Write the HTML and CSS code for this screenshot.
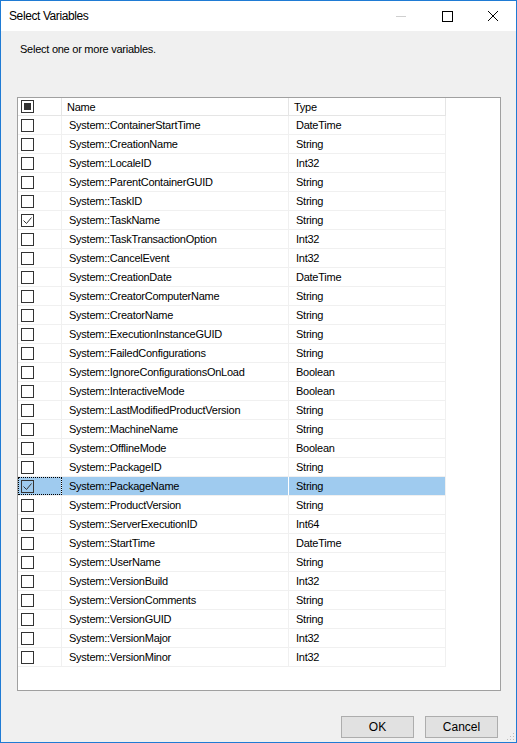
FILE: index.html
```html
<!DOCTYPE html>
<html>
<head>
<meta charset="utf-8">
<link rel="stylesheet" href="styles.css">
</head>
<body>
<div class="window">
  <div class="titlebar">
    <span class="title">Select Variables</span>
    <div class="controls">
      <svg class="ctl" width="46" height="30" viewBox="0 0 46 30"><path d="M18 15.5h10" stroke="#cfcfcf" stroke-width="1"/></svg>
      <svg class="ctl" width="46" height="30" viewBox="0 0 46 30"><rect x="18.5" y="10.5" width="10" height="10" fill="none" stroke="#000" stroke-width="1"/></svg>
      <svg class="ctl" width="46" height="30" viewBox="0 0 46 30"><path d="M18 10l10 10M28 10l-10 10" stroke="#000" stroke-width="1"/></svg>
    </div>
  </div>
  <div class="client">
    <p class="prompt">Select one or more variables.</p>
    <div class="gridbox">
      <div class="grid">
        <div class="row head">
          <div class="cell chk"><span class="box partial"></span></div>
          <div class="cell name">Name</div>
          <div class="cell type">Type</div>
        </div>
        <div class="row"><div class="cell chk"><span class="box"></span></div><div class="cell name">System::ContainerStartTime</div><div class="cell type">DateTime</div></div>
        <div class="row"><div class="cell chk"><span class="box"></span></div><div class="cell name">System::CreationName</div><div class="cell type">String</div></div>
        <div class="row"><div class="cell chk"><span class="box"></span></div><div class="cell name">System::LocaleID</div><div class="cell type">Int32</div></div>
        <div class="row"><div class="cell chk"><span class="box"></span></div><div class="cell name">System::ParentContainerGUID</div><div class="cell type">String</div></div>
        <div class="row"><div class="cell chk"><span class="box"></span></div><div class="cell name">System::TaskID</div><div class="cell type">String</div></div>
        <div class="row"><div class="cell chk"><span class="box"><svg class="tick" width="11" height="11" viewBox="0 0 11 11"><path d="M1.5 5.5l3 3 5-6" fill="none" stroke="#333" stroke-width="1"/></svg></span></div><div class="cell name">System::TaskName</div><div class="cell type">String</div></div>
        <div class="row"><div class="cell chk"><span class="box"></span></div><div class="cell name">System::TaskTransactionOption</div><div class="cell type">Int32</div></div>
        <div class="row"><div class="cell chk"><span class="box"></span></div><div class="cell name">System::CancelEvent</div><div class="cell type">Int32</div></div>
        <div class="row"><div class="cell chk"><span class="box"></span></div><div class="cell name">System::CreationDate</div><div class="cell type">DateTime</div></div>
        <div class="row"><div class="cell chk"><span class="box"></span></div><div class="cell name">System::CreatorComputerName</div><div class="cell type">String</div></div>
        <div class="row"><div class="cell chk"><span class="box"></span></div><div class="cell name">System::CreatorName</div><div class="cell type">String</div></div>
        <div class="row"><div class="cell chk"><span class="box"></span></div><div class="cell name">System::ExecutionInstanceGUID</div><div class="cell type">String</div></div>
        <div class="row"><div class="cell chk"><span class="box"></span></div><div class="cell name">System::FailedConfigurations</div><div class="cell type">String</div></div>
        <div class="row"><div class="cell chk"><span class="box"></span></div><div class="cell name">System::IgnoreConfigurationsOnLoad</div><div class="cell type">Boolean</div></div>
        <div class="row"><div class="cell chk"><span class="box"></span></div><div class="cell name">System::InteractiveMode</div><div class="cell type">Boolean</div></div>
        <div class="row"><div class="cell chk"><span class="box"></span></div><div class="cell name">System::LastModifiedProductVersion</div><div class="cell type">String</div></div>
        <div class="row"><div class="cell chk"><span class="box"></span></div><div class="cell name">System::MachineName</div><div class="cell type">String</div></div>
        <div class="row"><div class="cell chk"><span class="box"></span></div><div class="cell name">System::OfflineMode</div><div class="cell type">Boolean</div></div>
        <div class="row"><div class="cell chk"><span class="box"></span></div><div class="cell name">System::PackageID</div><div class="cell type">String</div></div>
        <div class="row selected"><div class="cell chk focus"><span class="box"><svg class="tick" width="11" height="11" viewBox="0 0 11 11"><path d="M1.5 5.5l3 3 5-6" fill="none" stroke="#333" stroke-width="1"/></svg></span></div><div class="cell name">System::PackageName</div><div class="cell type">String</div></div>
        <div class="row"><div class="cell chk"><span class="box"></span></div><div class="cell name">System::ProductVersion</div><div class="cell type">String</div></div>
        <div class="row"><div class="cell chk"><span class="box"></span></div><div class="cell name">System::ServerExecutionID</div><div class="cell type">Int64</div></div>
        <div class="row"><div class="cell chk"><span class="box"></span></div><div class="cell name">System::StartTime</div><div class="cell type">DateTime</div></div>
        <div class="row"><div class="cell chk"><span class="box"></span></div><div class="cell name">System::UserName</div><div class="cell type">String</div></div>
        <div class="row"><div class="cell chk"><span class="box"></span></div><div class="cell name">System::VersionBuild</div><div class="cell type">Int32</div></div>
        <div class="row"><div class="cell chk"><span class="box"></span></div><div class="cell name">System::VersionComments</div><div class="cell type">String</div></div>
        <div class="row"><div class="cell chk"><span class="box"></span></div><div class="cell name">System::VersionGUID</div><div class="cell type">String</div></div>
        <div class="row"><div class="cell chk"><span class="box"></span></div><div class="cell name">System::VersionMajor</div><div class="cell type">Int32</div></div>
        <div class="row"><div class="cell chk"><span class="box"></span></div><div class="cell name">System::VersionMinor</div><div class="cell type">Int32</div></div>
      </div>
    </div>
    <div class="buttons">
      <button class="btn">OK</button>
      <button class="btn">Cancel</button>
    </div>
    <svg class="grip" width="10" height="10" viewBox="0 0 10 10">
      <rect x="7" y="1" width="1" height="1" fill="#bbb"/>
      <rect x="4" y="4" width="1" height="1" fill="#bbb"/><rect x="7" y="4" width="1" height="1" fill="#bbb"/>
      <rect x="1" y="7" width="1" height="1" fill="#bbb"/><rect x="4" y="7" width="1" height="1" fill="#bbb"/><rect x="7" y="7" width="1" height="1" fill="#bbb"/>
    </svg>
  </div>
</div>
</body>
</html>
```
FILE: styles.css
```css
* { box-sizing: border-box; }
html, body { margin: 0; padding: 0; }
body {
  width: 517px;
  height: 743px;
  overflow: hidden;
  font-family: "Liberation Sans", Arial, sans-serif;
  font-size: 11px;
  letter-spacing: -0.25px;
  color: #000;
  background: #f0f0f0;
}
.window {
  width: 517px;
  height: 743px;
  border: 1px solid #1f7bd4;
  display: flex;
  flex-direction: column;
  background: #f0f0f0;
}
.titlebar {
  height: 30px;
  background: #fff;
  display: flex;
  align-items: center;
  justify-content: space-between;
  flex: none;
}
.title {
  padding-left: 8px;
  font-size: 12px;
  letter-spacing: -0.4px;
}
.controls {
  display: flex;
  align-self: stretch;
}
.ctl { display: block; }
.client {
  position: relative;
  flex: 1;
  display: flex;
  flex-direction: column;
  padding: 0 15px 0 16px;
}
.prompt {
  margin: 11px 0 0 3px;
  height: 15px;
  line-height: 15px;
}
.gridbox {
  margin-top: 40px;
  height: 594px;
  border: 1px solid #a0a0a0;
  background: #fff;
}
.grid {
  display: flex;
  flex-direction: column;
}
.row {
  display: flex;
  height: 19px;
  border-bottom: 1px solid #f0f0f0;
  width: 428px;
}
.row.head {
  height: 18px;
  border-bottom: 1px solid #e5e5e5;
}
.cell {
  border-right: 1px solid #f0f0f0;
  display: flex;
  align-items: center;
  white-space: nowrap;
}
.head .cell { border-right-color: #e5e5e5; }
.chk { width: 44px; padding-left: 3px; }
.name { width: 227px; padding-left: 7px; }
.type { width: 157px; padding-left: 7px; }
.head .name { padding-left: 5px; }
.head .type { padding-left: 5px; }
.box {
  width: 13px;
  height: 13px;
  border: 1px solid #333;
  background: #fff;
  display: flex;
  align-items: center;
  justify-content: center;
}
.box.partial::after {
  content: "";
  width: 7px;
  height: 7px;
  background: #333;
}
.tick { display: block; }
.selected .cell { background: #9fcbef; }
.selected .name { border-right-color: #fff; }
.selected .box { background: #9fcbef; }
.focus {
  outline: 1px dotted #000;
  outline-offset: -1px;
}
.buttons {
  display: flex;
  justify-content: flex-end;
  gap: 11px;
  margin-top: 25px;
  padding-right: 3px;
}
.btn {
  width: 73px;
  height: 22px;
  border: 1px solid #adadad;
  background: #e1e1e1;
  font-family: inherit;
  font-size: 12px;
  color: #000;
  padding: 0;
}
.grip {
  position: absolute;
  right: 0;
  bottom: 0;
}
```
